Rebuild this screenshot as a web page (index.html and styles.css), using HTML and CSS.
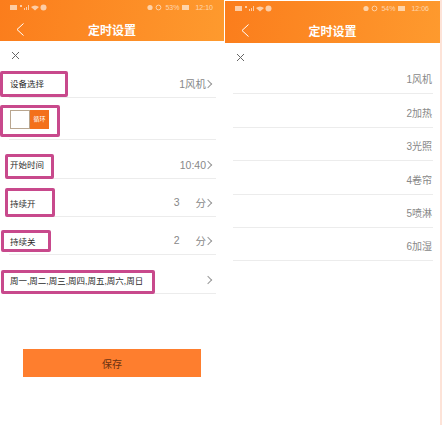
FILE: index.html
```html
<!DOCTYPE html>
<html lang="zh">
<head>
    <meta charset="UTF-8">
    <title>定时设置</title>
    <link rel="stylesheet" href="styles.css">
</head>
<body>
<div class="shots">

    <!-- 左边: 设置 -->
    <div class="phone phone-left">
        <div class="header">
            <div class="status">
                <span class="status-group">
                    <svg width="37" height="7" viewBox="0 0 37 7"><rect x="0" y="1" width="7" height="5" fill="#fff"/><rect x="10" y="1" width="2" height="2" fill="#fff"/><rect x="14" y="4" width="1" height="2" fill="#fff"/><rect x="16" y="3" width="1" height="3" fill="#fff"/><rect x="18" y="1" width="1" height="5" fill="#fff"/><path d="M21 3 Q25 0 29 3 L25 6.5Z" fill="#fff"/><circle cx="33.5" cy="3.5" r="3" fill="#fff"/></svg>
                </span>
                <span class="status-group">
                    <svg width="15" height="7" viewBox="0 0 15 7"><circle cx="3" cy="3.5" r="2.6" fill="#fff"/><circle cx="11.5" cy="3.5" r="2.4" fill="none" stroke="#fff"/></svg>
                    <span>53%</span>
                    <span class="battery"></span>
                    <span>12:10</span>
                </span>
            </div>
            <div class="title-bar">
                <svg class="back" width="8" height="13" viewBox="0 0 8 13"><path d="M7.5 0.5 L1 6.5 L7.5 12.5" fill="none" stroke="#fff" stroke-width="1"/></svg>
                <span class="title">定时设置</span>
            </div>
        </div>

        <div class="close-row"><svg width="9" height="9" viewBox="0 0 9 9"><path d="M1 1 L8 8 M8 1 L1 8" stroke="#666" stroke-width="1"/></svg></div>

        <div class="rows">
            <div class="row row-device">
                <span class="mark mark-device">设备选择</span>
                <span class="val">1风机<i class="chev"></i></span>
            </div>
            <div class="row row-toggle">
                <span class="mark mark-toggle">
                    <span class="toggle"><span class="toggle-off"></span><span class="toggle-on">循环</span></span>
                </span>
            </div>
            <div class="row row-start">
                <span class="mark mark-start">开始时间</span>
                <span class="val">10:40<i class="chev"></i></span>
            </div>
            <div class="row row-on">
                <span class="mark mark-on">持续开</span>
                <span class="val"><span class="num">3</span>分<i class="chev"></i></span>
            </div>
            <div class="row row-off">
                <span class="mark mark-off">持续关</span>
                <span class="val"><span class="num">2</span>分<i class="chev"></i></span>
            </div>
            <div class="row row-days">
                <span class="mark mark-days">周一,周二,周三,周四,周五,周六,周日</span>
                <span class="val"><i class="chev"></i></span>
            </div>
        </div>

        <button class="save">保存</button>
    </div>

    <!-- 右边: 设备列表 -->
    <div class="phone phone-right">
        <div class="header">
            <div class="status">
                <span class="status-group">
                    <svg width="37" height="7" viewBox="0 0 37 7"><rect x="0" y="1" width="7" height="5" fill="#fff"/><rect x="10" y="1" width="2" height="2" fill="#fff"/><rect x="14" y="4" width="1" height="2" fill="#fff"/><rect x="16" y="3" width="1" height="3" fill="#fff"/><rect x="18" y="1" width="1" height="5" fill="#fff"/><path d="M21 3 Q25 0 29 3 L25 6.5Z" fill="#fff"/><circle cx="33.5" cy="3.5" r="3" fill="#fff"/></svg>
                </span>
                <span class="status-group">
                    <svg width="15" height="7" viewBox="0 0 15 7"><circle cx="3" cy="3.5" r="2.6" fill="#fff"/><circle cx="11.5" cy="3.5" r="2.4" fill="none" stroke="#fff"/></svg>
                    <span>54%</span>
                    <span class="battery"></span>
                    <span>12:06</span>
                </span>
            </div>
            <div class="title-bar">
                <svg class="back" width="8" height="13" viewBox="0 0 8 13"><path d="M7.5 0.5 L1 6.5 L7.5 12.5" fill="none" stroke="#fff" stroke-width="1"/></svg>
                <span class="title">定时设置</span>
            </div>
        </div>

        <div class="close-row"><svg width="9" height="9" viewBox="0 0 9 9"><path d="M1 1 L8 8 M8 1 L1 8" stroke="#666" stroke-width="1"/></svg></div>

        <div class="list">
            <div class="list-item">1风机</div>
            <div class="list-item">2加热</div>
            <div class="list-item">3光照</div>
            <div class="list-item">4卷帘</div>
            <div class="list-item">5喷淋</div>
            <div class="list-item">6加湿</div>
        </div>
    </div>

</div>
</body>
</html>
```

FILE: styles.css
```css
html, body {
    margin: 0;
    padding: 0;
    background: #fff;
}

body {
    font-family: "Liberation Sans", "Noto Sans CJK SC", sans-serif;
    color: #444;
}

.shots {
    display: flex;
    width: 442px;
    height: 425px;
    overflow: hidden;
    box-sizing: border-box;
    border-right: 2px solid #fde3d8;
}

.phone-left {
    width: 225px;
    flex: none;
}

.phone-right {
    flex: 1;
    padding-top: 1px;
}

.header {
    height: 41px;
    background: linear-gradient(100deg, #fb7d1c, #fe9a2e);
    color: #fff;
}

.phone-left .header {
    width: 224px;
}

.phone-right .header {
    height: 42px;
}

.status {
    display: flex;
    justify-content: space-between;
    align-items: center;
    height: 14px;
    padding: 0 11px 0 10px;
    font-size: 7px;
    opacity: 0.6;
}

.status-group {
    display: flex;
    align-items: center;
    gap: 3px;
}

.battery {
    width: 7px;
    height: 5px;
    margin-right: 3px;
    background: #fff;
}

.title-bar {
    display: flex;
    align-items: center;
    justify-content: center;
    height: 27px;
    position: relative;
    padding-top: 3px;
    box-sizing: border-box;
}

.phone-right .title-bar {
    height: 28px;
}

.back {
    position: absolute;
    left: 16px;
    top: 9px;
}

.title {
    font-size: 12px;
    font-weight: bold;
}

.close-row {
    display: flex;
    align-items: center;
    height: 28px;
    padding-left: 11px;
}

.rows {
    width: 216px;
}

.row {
    display: flex;
    justify-content: space-between;
    align-items: flex-end;
    box-sizing: border-box;
    margin-left: 9px;
    border-bottom: 1px solid #ececec;
    font-size: 8.5px;
}

.row-device { height: 29px; }
.row-toggle { height: 42px; }
.row-start { height: 39px; }
.row-on { height: 38px; }
.row-off { height: 38px; }
.row-days { height: 39px; }

.mark {
    border: 3px solid #c8498c;
    border-radius: 2px;
    box-sizing: border-box;
    display: flex;
    align-items: center;
    color: #2b2b2b;
    white-space: nowrap;
}

.mark-device {
    width: 68px;
    height: 26px;
    margin: 0 0 0 -9px;
    padding: 0 0 2px 7px;
}

.mark-toggle {
    width: 60px;
    height: 32px;
    margin: 0 0 2px -9px;
    padding: 2px 0 0 7px;
    align-items: flex-start;
}

.mark-start {
    width: 49px;
    height: 25px;
    margin: 0 0 -1px -4px;
    padding: 0 0 5px 2px;
}

.mark-on {
    width: 50px;
    height: 29px;
    margin: 0 0 -1px -4px;
    padding: 0 0 0 2px;
}

.mark-off {
    width: 50px;
    height: 22px;
    margin: 0 0 2px -8px;
    padding: 0 0 0 6px;
}

.mark-days {
    width: 154px;
    height: 24px;
    margin: 0 0 -1px -8px;
    padding: 0 0 4px 6px;
}

.val {
    display: flex;
    align-items: center;
    height: 13px;
    margin-bottom: 7px;
    font-size: 10.5px;
    color: #888;
}

.num {
    margin-right: 16px;
    position: relative;
    top: -1px;
}

.chev {
    width: 6px;
    height: 6px;
    margin: 1px 5px 0 -1px;
    box-sizing: border-box;
    border-top: 1px solid #999;
    border-right: 1px solid #999;
    transform: rotate(45deg);
}

.toggle {
    display: flex;
    width: 39px;
    height: 19px;
}

.toggle-off {
    flex: 1;
    background: #fff;
    border: 1px solid #b9a68f;
}

.toggle-on {
    width: 19px;
    background: #f3701b;
    color: #fff;
    font-size: 6px;
    line-height: 19px;
    text-align: center;
}

.save {
    display: block;
    width: 178px;
    height: 28px;
    margin: 55px 0 0 23px;
    padding: 0;
    background: #fe7e2e;
    border: none;
    border-radius: 0;
    font-family: inherit;
    font-size: 10px;
    color: #6b3212;
}

.list {
    margin: 0 7px 0 8px;
}

.list-item {
    box-sizing: border-box;
    height: 33.4px;
    padding: 13.4px 1px 0 0;
    line-height: 12px;
    text-align: right;
    font-size: 10px;
    color: #888;
    border-bottom: 1px solid #ececec;
}

.list-item:first-child {
    height: 23.4px;
    padding-top: 3.4px;
}
```
